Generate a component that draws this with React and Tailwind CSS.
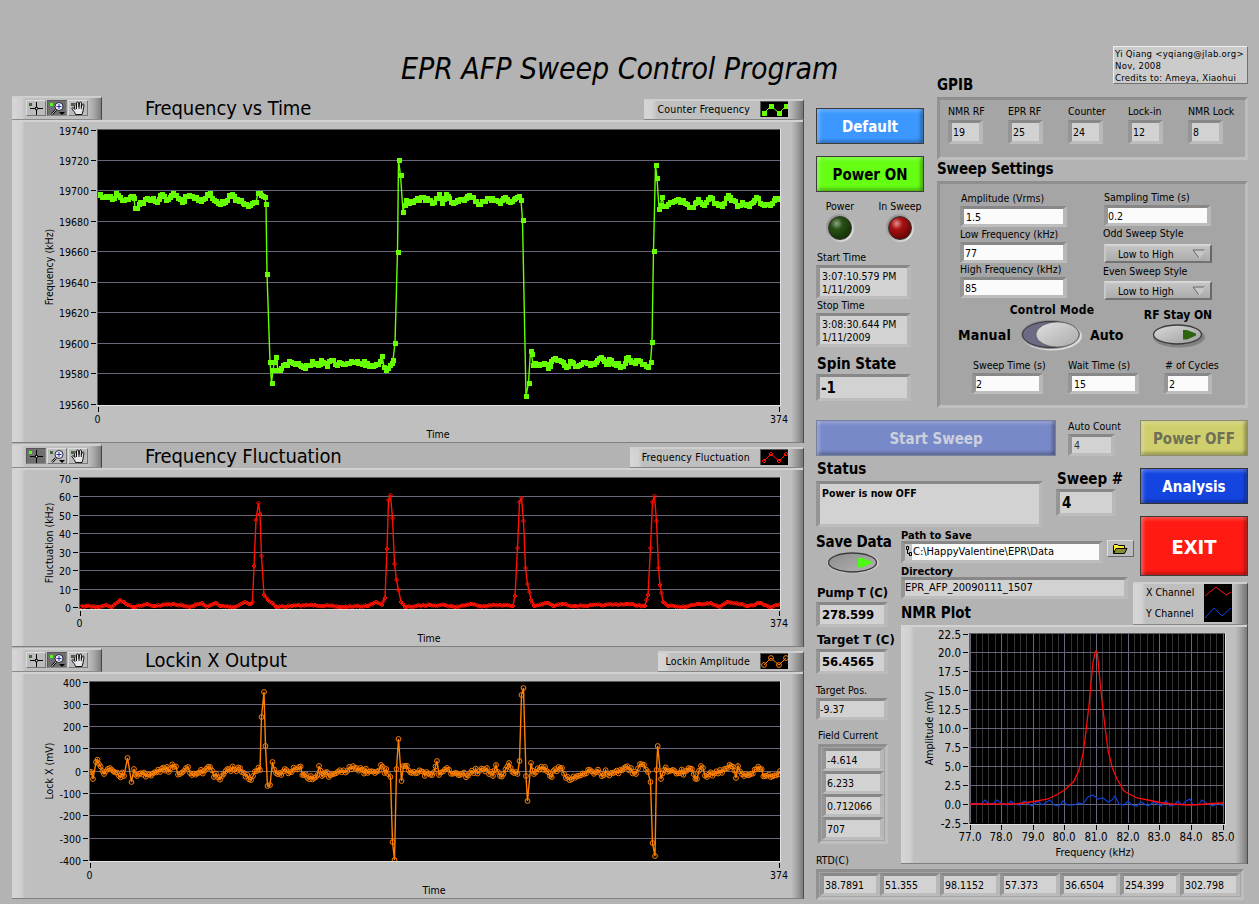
const GREEN = [[98,195],[102,197],[108,197],[114,198],[116,193],[120,197],[122,200],[128,199],[131,196],[134,198],[135,208],[137,208],[140,202],[143,203],[145,199],[150,200],[153,198],[157,202],[162,194],[166,200],[173,193],[178,198],[182,202],[187,196],[192,196],[198,200],[203,199],[210,193],[214,200],[218,203],[225,202],[229,195],[232,194],[235,200],[241,200],[246,204],[252,203],[256,202],[258,193],[261,195],[265,197],[266,204],[267,274],[270,362],[271.5,383],[273,370],[276,357],[278,370],[283,365],[291,362],[298,363],[303,367],[308,365],[312,361],[318,365],[321,360],[327,366],[331,360],[335,364],[345,364],[355,362],[367,363],[371,365],[378,364],[382,356],[384,367],[386,370],[390,365],[393,360],[395,343],[397.5,252],[398.5,160],[400.5,175],[403,212],[406,200],[409,203],[417,198],[427,198],[432,203],[439,194],[442,203],[446,194],[451,202],[462,199],[471,197],[478,204],[487,198],[496,200],[500,203],[505,197],[510,202],[519,196],[521,200],[522.5,220],[526,396],[528.5,383],[530.5,351],[531.5,354],[533,365],[544,363],[548,368],[553,359],[561,361],[566,367],[570,361],[575,366],[583,362],[590,365],[601,357],[606,364],[611,360],[616,365],[623,366],[628,357],[633,362],[638,360],[642,364],[648,367],[650.5,362],[652,342],[653.5,251],[655.5,165],[657,178],[659,209],[662,197],[664,206],[672,202],[678,199],[685,203],[693,207],[698,199],[704,205],[710,197],[716,203],[722,206],[728,195],[733,200],[737,206],[742,202],[749,206],[756,197],[760,203],[770,205],[777,198],[780,199]];
const RED = [[81,607],[86,606],[98,607],[106,605],[112,607],[120,600],[126,604],[134,607],[147,604],[155,606],[173,604],[190,607],[202,603],[207,607],[216,603],[220,606],[235,607],[245,602],[251,604],[252.5,602],[254,566],[256,520],[258.5,503],[260,514],[261.5,556],[264,595],[268,600],[272,603],[276,607],[292,606],[315,605],[340,607],[367,606],[376,602],[382,605],[385,598],[387,549],[388.5,500],[390.5,495],[392.5,518],[394.5,564],[396.5,580],[398.5,590],[401,602],[405,607],[430,605],[445,605],[455,607],[471,604],[480,606],[500,605],[513,606],[515,596],[517.5,548],[519.5,502],[521.5,498],[523.5,521],[525.5,568],[527.5,584],[529.5,592],[531,600],[534,606],[548,603],[553,606],[562,604],[575,606],[605,605],[626,604],[645,606],[648,595],[650.5,548],[652.5,502],[654.5,496],[656.5,521],[658.5,568],[660,585],[661.5,593],[663,602],[668,606],[685,607],[700,604],[711,603],[720,607],[727,602],[742,604],[748,606],[760,603],[772,607],[780,604]];
const ORANGE = [[90,772],[93,779],[96,762],[99,764],[104,774],[112,770],[124,776],[127.5,758],[131.5,782],[134,769],[137,776],[160,772],[174,767],[180,774],[188,767],[192,775],[210,767],[214,777],[222,776],[229,769],[240,768],[251,780],[257,771],[260,770],[261.5,717],[264,692],[265.5,746],[267.5,786],[270,785],[272.5,762],[276,773],[290,772],[299,767],[304,775],[316,777],[319,766],[322,776],[334,774],[355,768],[375,773],[381,765],[388,774],[390.5,777],[392.5,842],[394.5,860],[396.5,769],[398.5,739],[401.5,781],[403.5,766],[412,773],[434,772],[437,761],[439,775],[447,768],[455,773],[460,775],[470,773],[487,768],[493,776],[496,765],[500,776],[509,763],[514,773],[517.5,774],[519.5,761],[521.5,695],[523.5,688],[526,776],[527.5,801],[531,763],[534,774],[545,767],[550,776],[562,768],[566,778],[590,770],[600,773],[615,772],[631,768],[636,774],[640,764],[648,772],[650.5,782],[652.5,843],[655,856],[656.5,770],[657.7,746],[661,779],[664,770],[680,773],[692,769],[697,779],[701,766],[707,777],[720,770],[728,768],[731,766],[736,778],[738,766],[744,776],[760,769],[765,776],[780,771]];
const X_CHANNEL = [[970,804],[1016,804],[1034,801.5],[1048,799],[1058,794],[1066,789],[1074,781],[1079,770],[1083,754],[1086,731],[1089,705],[1091,683],[1093,662],[1095,653],[1096,651],[1097.5,654],[1099,671],[1102,701],[1105,727],[1108,750],[1112,767],[1117,779],[1124,791],[1129,794],[1137,798],[1148,800],[1160,802.5],[1172,804],[1188,805],[1200,804.5],[1212,803.5],[1223,803]];
const Y_CHANNEL = [[970,804],[976,803],[981,804],[985,800],[989,804],[994,803],[997,800],[1001,803],[1007,805],[1011,801],[1014,804],[1020,805],[1024,801],[1028,803],[1032,806],[1038,801],[1042,805],[1050,800],[1054,805],[1059,806],[1063,801],[1067,805],[1074,805],[1079,803],[1083,804],[1088,797],[1093,795],[1098,799],[1103,798],[1108,802],[1112,800],[1115,796],[1119,804],[1124,805],[1128,801],[1132,805],[1137,806],[1141,802],[1148,806],[1154,802],[1161,806],[1166,801],[1170,806],[1174,805],[1178,801],[1182,805],[1186,801],[1190,799],[1193,805],[1199,804],[1202,800],[1206,803],[1213,806],[1218,803],[1223,806]];

// Resample a polyline at the scan pitch; flat stretches get measurement noise.
function resample(points, noise, seed) {
  const out = [];
  let s = seed;
  const rnd = () => {
    s = (s * 16807) % 2147483647;
    return s / 2147483647 - 0.5;
  };
  for (let i = 0; i < points.length - 1; i++) {
    const [x0, y0] = points[i];
    const [x1, y1] = points[i + 1];
    const steep = Math.abs(y1 - y0) > 14;
    out.push([x0, y0]);
    const n = steep ? 1 : Math.round((x1 - x0) / 1.83);
    for (let k = 1; k < n; k++) {
      out.push([x0 + ((x1 - x0) * k) / n, y0 + ((y1 - y0) * k) / n + rnd() * noise]);
    }
  }
  out.push(points[points.length - 1]);
  return out;
}

const toLine = (pts) => pts.map(([x, y]) => `${x.toFixed(1)},${y.toFixed(1)}`).join(" ");

function Marker({ kind, x, y }) {
  if (kind === "square") return <rect x={Math.round(x) - 2} y={Math.round(y) - 2} width="5" height="5" fill="#66ff00" />;
  if (kind === "diamond") return <path d={`M${x - 2} ${y}l2 -2l2 2l-2 2z`} fill="none" stroke="#ff1000" />;
  return <circle cx={x} cy={y} r="2.4" fill="none" stroke="#ff8000" />;
}

function Scope({ top, height, plot, yLabels, yFirst, yStep, yTitle, points, color, kind, titleX, titleY }) {
  const [x0, y0, x1, y1] = plot;
  const mid = (y0 + y1) / 2;
  return (
    <svg className="block text-[10.5px]" width="792" height={height} viewBox={`12 ${top} 792 ${height}`}>
      <rect x={x0} y={y0} width={x1 - x0} height={y1 - y0} fill="#000" />
      <path d={`M${x0 + 0.5} ${y1}V${y0 + 0.5}H${x1}`} fill="none" stroke="#5c5c5c" />
      <path d={`M${x0} ${y1 + 0.5}H${x1 + 0.5}V${y0}`} fill="none" stroke="#e2e2e2" />
      {yLabels.map((label, i) => {
        const y = Math.floor(yFirst + i * yStep) + 0.5;
        return (
          <g key={label}>
            {i > 0 && i < yLabels.length - 1 && <path d={`M${x0 + 1} ${y}H${x1}`} stroke="#676779" />}
            <path d={`M${x0 - 6} ${y}h5`} stroke="#000" />
            <text x={x0 - 8} y={y + 4} textAnchor="end">{label}</text>
          </g>
        );
      })}
      <path d={`M${x0 + 1.5} ${y1 + 2}v5M${x1 - 0.5} ${y1 + 2}v5`} stroke="#000" />
      <text x={x0 + 0.5} y={y1 + 18} textAnchor="middle">0</text>
      <text x={x1 - 1} y={y1 + 18} textAnchor="middle">374</text>
      <text x={titleX} y={titleY} textAnchor="middle">Time</text>
      <text transform={`translate(53 ${mid}) rotate(-90)`} textAnchor="middle">{yTitle}</text>
      <svg x={x0 + 1} y={y0 + 1} width={x1 - x0 - 1} height={y1 - y0 - 1} viewBox={`${x0 + 1} ${y0 + 1} ${x1 - x0 - 1} ${y1 - y0 - 1}`}>
        <polyline points={toLine(points)} fill="none" stroke={color} strokeWidth="1.4" />
        {points.map(([x, y], i) => <Marker key={i} kind={kind} x={x} y={y} />)}
      </svg>
    </svg>
  );
}

function ToolPalette({ active }) {
  const cell = "w-[20px] h-4 border border-t-[#dedede] border-l-[#dedede] border-b-[#777] border-r-[#777] bg-[#bcbcbc]";
  const pressed = "w-[20px] h-4 border border-t-[#555] border-l-[#555] border-b-[#888] border-r-[#888] bg-[#6f6f6f]";
  const led = (i) => (active === i ? "#52ff1a" : "#3e6a35");
  return (
    <div className="flex gap-px w-[90px] h-6 pl-[14px] pt-[2px] border-t-2 border-t-[#cfcfcf] border-b border-b-[#8a8a8a] border-r border-r-[#444] bg-[linear-gradient(90deg,#d6d6d6_0,#d0d0d0_9px,#bfbfbf_14px,#bfbfbf_76px,#a8a8a8_82px,#7a7a7a_90px)]">
      <div className={active === 0 ? pressed : cell}>
        <svg width="18" height="14">
          <rect x="2" y="2" width="3" height="3" fill={led(0)} />
          <path d="M3 7.5h5M11 7.5h5M9.5 1v5M9.5 9v5" stroke="#000" />
          <rect x="8.5" y="6.5" width="2" height="2" fill="#eee" stroke="#000" strokeWidth=".8" />
        </svg>
      </div>
      <div className={active === 1 ? pressed : cell}>
        <svg width="18" height="14">
          <rect x="2" y="2" width="3" height="3" fill={led(1)} />
          <path d="M8 9L4 13" stroke="#000" strokeWidth="2.2" />
          <path d="M8 9L4 13" stroke="#ddd" strokeWidth=".8" />
          <circle cx="11" cy="5.5" r="4" fill="#f4f4ff" stroke="#223" />
          <path d="M8.5 5.5h5M11 3v5" stroke="#22309a" />
          <path d="M11 11h6l-3 3z" fill="#000" />
        </svg>
      </div>
      <div className={active === 2 ? pressed : cell}>
        <svg width="18" height="14">
          <path d="M6.5 13.5C6 11 4 9.5 2.8 7.5C3.3 6.3 4.8 6.500 6 8.500L5 3.500C5.300 2.200 6.600 2.300 7 3.500L7.500 6V1.800C8 .6 9.300.6 9.600 1.800L10 5.800L10.600 1.500C11.200.6 12.400.8 12.500 2L12.300 6L13.300 3.500C14 2.600 15 3 15 4L14 10L13 13.500Z" fill="#e8e8e8" stroke="#000" strokeWidth=".9" />
          <path d="M7.500 6V8M10 5.500V8M12.300 6V8" stroke="#000" strokeWidth=".9" />
          <rect x="2" y="2" width="3" height="3" fill={led(2)} />
        </svg>
      </div>
    </div>
  );
}

function Tab({ className, children }) {
  return (
    <div className={`flex items-center border-t-2 border-t-[#cfcfcf] border-b border-b-[#858585] border-r border-r-[#4c4c4c] bg-[linear-gradient(90deg,#d6d6d6_0,#d2d2d2_8px,#bfbfbf_13px,#bfbfbf_calc(100%-14px),#a8a8a8_calc(100%-9px),#757575_100%)] ${className}`}>
      {children}
    </div>
  );
}

function LegendSwatch({ color, kind }) {
  const pts = [[3, 11], [10, 4], [18, 11], [25, 4]];
  return (
    <svg className="border-t border-l border-[#555]" width="28" height="16">
      <rect width="28" height="16" fill="#000" />
      <polyline points={toLine(pts)} fill="none" stroke={color} />
      {pts.map(([x, y]) => <Marker key={x} kind={kind} x={x} y={y} />)}
    </svg>
  );
}

function ScopePanel({ title, legend, legendClass, active, ...scope }) {
  return (
    <section>
      <div className="flex h-6 items-end">
        <ToolPalette active={active} />
        <h2 className="ml-[43px] mb-px flex-1 text-[20px] leading-[22px] tracking-[-0.12px] whitespace-nowrap">{title}</h2>
        <Tab className={`h-[21px] justify-end pb-[2px] pr-[15px] gap-[10px] ${legendClass}`}>
          <span className="whitespace-nowrap tracking-[0.18px]">{legend}</span>
          <LegendSwatch color={scope.color} kind={scope.kind} />
        </Tab>
      </div>
      <div className="w-[792px] border-r border-r-[#4c4c4c] bg-[linear-gradient(90deg,#d6d6d6_0,#d0d0d0_9px,#bfbfbf_13px,#bfbfbf_779px,#a8a8a8_784px,#757575_792px)]">
        <div className="border-t-2 border-t-[#d2d2d2] border-b border-b-[#7e7e7e]">
          <div className="-mt-[2px] -mb-px">
            <Scope {...scope} />
          </div>
        </div>
      </div>
    </section>
  );
}

function Well({ className = "", pad = "pl-[2px]", align = "items-center", light, children }) {
  return (
    <div className={`flex border-[4px] border-y-[3px] border-t-[#888] border-l-[#959595] border-r-[#b8b8b8] border-b-[#bdbdbd] whitespace-nowrap ${align} ${pad} ${light ? "bg-[#fbfbfb]" : "bg-[#d2d2d2]"} ${className}`}>
      {children}
    </div>
  );
}

function Label({ className = "", pad = "pl-px", children }) {
  return <div className={`whitespace-nowrap ${pad} ${className}`}>{children}</div>;
}

function PushButton({ className, children }) {
  return (
    <button type="button" className={`flex items-center justify-center pt-[2px] border font-bold shadow-[inset_4px_0_3px_-1px_rgba(255,255,255,.22),inset_0_3px_3px_rgba(255,255,255,.18),inset_-4px_0_3px_-1px_rgba(0,0,0,.25),inset_0_-3px_3px_rgba(0,0,0,.22)] ${className}`}>
      {children}
    </button>
  );
}

function Led({ label, className }) {
  return (
    <div className="flex flex-col items-center w-[60px] shrink-0">
      <span className="h-[15px] leading-[15px] whitespace-nowrap">{label}</span>
      <div className="size-[28px] p-[2px] rounded-full bg-linear-to-br from-[#8b8b8b] via-[#b0b0b0] to-[#f4f4f4]">
        <div className={`size-6 rounded-full border border-[#303030] ${className}`} />
      </div>
    </div>
  );
}

function Ring() {
  return (
    <div className="flex items-center justify-between w-[108px] h-[19px] pl-3 pr-1 border-2 border-t-[#d6d6d6] border-l-[#c8c8c8] border-b-[#727272] border-r-[#676767] bg-linear-to-b from-[#c4c4c4] to-[#acacac]">
      <span className="whitespace-nowrap">Low to High</span>
      <svg width="14" height="10">
        <path d="M1 1H13L7 9Z" fill="#c6c6c6" stroke="#666" />
        <path d="M7 9L13 1" stroke="#eee" />
      </svg>
    </div>
  );
}

function OvalButton({ on }) {
  return (
    <svg width="56" height="26">
      <defs>
        <linearGradient id={on ? "ovalOn" : "ovalOff"} x1="0" y1="0" x2="1" y2="1">
          <stop offset="0" stopColor={on ? "#8c8c8c" : "#dadada"} />
          <stop offset="1" stopColor={on ? "#b4b4b4" : "#9c9c9c"} />
        </linearGradient>
      </defs>
      <ellipse cx={on ? 28 : 29} cy={on ? 13 : 15} rx="26" ry="10.5" fill={on ? "#cacaca" : "#828282"} />
      <ellipse cx="27.5" cy="12.5" rx="24" ry="9.5" fill={on ? "url(#ovalOn)" : "url(#ovalOff)"} stroke="#3c3c3c" strokeWidth="1.3" />
      <path d="M33 8H37L46 11.5V13.5L37 17.5H33Z" fill={on ? "#4cfb12" : "#2c6412"} />
    </svg>
  );
}

function NmrGraph() {
  const yLabels = ["22.5", "20.0", "17.5", "15.0", "12.5", "10.0", "7.5", "5.0", "2.5", "0.0", "-2.5"];
  const xLabels = ["77.0", "78.0", "79.0", "80.0", "81.0", "82.0", "83.0", "84.0", "85.0"];
  const minor = Array.from({ length: 41 }, (_, i) => Math.floor(970 + i * 6.33) + 0.5);
  return (
    <svg className="block text-[12px]" width="347" height="239" viewBox="901 625 347 239">
      <rect x="969" y="633" width="256" height="191" fill="#000" />
      {minor.map((x, i) => <path key={x} d={`M${x} 634V823`} stroke={i % 5 ? "#333" : "#676779"} />)}
      {yLabels.map((label, i) => {
        const y = Math.floor(634 + i * 18.9) + 0.5;
        return (
          <g key={label}>
            {i > 0 && i < 10 && <path d={`M970 ${y}H1224`} stroke="#676779" />}
            <path d={`M963 ${y}h5`} stroke="#000" />
            <text x="961" y={y + 4.5} textAnchor="end" className="text-[11.5px]">{label}</text>
          </g>
        );
      })}
      {xLabels.map((label, i) => {
        const x = Math.floor(970 + i * 31.65) + 0.5;
        return (
          <g key={label}>
            <path d={`M${x} 825v5`} stroke="#000" />
            <text x={x - 0.5} y="841" textAnchor="middle" className="text-[11.5px]">{label}</text>
          </g>
        );
      })}
      <path d="M969.5 824V633.5H1225" fill="none" stroke="#5c5c5c" />
      <path d="M969 824.5H1225.5V633" fill="none" stroke="#e2e2e2" />
      <polyline points={toLine(Y_CHANNEL)} fill="none" stroke="#0a3fd8" strokeWidth="1.2" />
      <polyline points={toLine(X_CHANNEL)} fill="none" stroke="#ff0a0a" strokeWidth="1.3" />
      <text x="1095" y="856" textAnchor="middle" className="text-[10.8px]">Frequency (kHz)</text>
      <text transform="translate(933 728) rotate(-90)" textAnchor="middle" className="text-[10.5px]">Amplitude (mV)</text>
    </svg>
  );
}

const FRAME = "border-[3px] border-t-[#8e8e8e] border-l-[#929292] border-r-[#bdbdbd] border-b-[#bfbfbf]";

export default function App() {
  const gpib = [["NMR RF", "19"], ["EPR RF", "25"], ["Counter", "24"], ["Lock-in", "12"], ["NMR Lock", "8"]];
  const rtd = ["38.7891", "51.355", "98.1152", "57.373", "36.6504", "254.399", "302.798"];
  return (
    <div className="flex w-[1259px] h-[904px] overflow-hidden bg-[#b3b3b3] text-black text-[10.5px] leading-[14px] font-['DejaVu_Sans_Condensed','DejaVu_Sans',sans-serif]">
      <main className="ml-3 w-[792px] shrink-0">
        <h1 className="h-24 pt-[49px] pl-[389px] text-[30px] leading-10 italic tracking-[-0.07px] whitespace-nowrap">EPR AFP Sweep Control Program</h1>
        <div className="flex flex-col gap-px">
          <ScopePanel
            title="Frequency vs Time" legend="Counter Frequency" legendClass="w-[160px]" active={1}
            top={120} height={323} plot={[97, 129, 780, 405]} yFirst={130} yStep={30.45}
            yLabels={["19740", "19720", "19700", "19680", "19660", "19640", "19620", "19600", "19580", "19560"]}
            yTitle="Frequency (kHz)" points={resample(GREEN, 4, 11)} color="#66ff00" kind="square" titleX={438} titleY={438}
          />
          <ScopePanel
            title="Frequency Fluctuation" legend="Frequency Fluctuation" legendClass="w-[174px]" active={0}
            top={468} height={179} plot={[79, 477, 780, 609]} yFirst={478} yStep={18.57}
            yLabels={["70", "60", "50", "40", "30", "20", "10", "0"]}
            yTitle="Fluctuation (kHz)" points={resample(RED, 1.5, 7)} color="#ff1000" kind="diamond" titleX={429} titleY={642}
          />
          <ScopePanel
            title="Lockin X Output" legend="Lockin Amplitude" legendClass="w-[146px]" active={1}
            top={672} height={227} plot={[89, 681, 780, 861]} yFirst={682} yStep={22.3}
            yLabels={["400", "300", "200", "100", "0", "-100", "-200", "-300", "-400"]}
            yTitle="Lock X (mV)" points={resample(ORANGE, 7, 23)} color="#ff8000" kind="circle" titleX={434} titleY={894}
          />
        </div>
      </main>

      <aside className="ml-3 w-[432px] shrink-0">
        <div className="flex h-[420px] justify-between">
          <div className="w-[108px] pt-[108px]">
            <PushButton className="w-[108px] h-9 border-[#3c3c3c] bg-[#3c98ff] text-white text-[15px]">Default</PushButton>
            <PushButton className="mt-3 w-[108px] h-9 border-[#3c3c3c] bg-[#66ff14] text-[15px]">Power ON</PushButton>
            <div className="flex mt-[7px] -ml-[6px]">
              <Led label="Power" className="bg-[radial-gradient(circle_at_35%_30%,#8fa388_0,#285214_28%,#16350a_70%)]" />
              <Led label="In Sweep" className="bg-[radial-gradient(circle_at_35%_30%,#df9090_0,#a81212_28%,#680505_75%)]" />
            </div>
            <Label className="mt-2">Start Time</Label>
            <Well className="mt-px w-[95px] h-[34px] leading-[13px]" pad="pl-[2px] pt-px">3:07:10.579 PM<br />1/11/2009</Well>
            <Label className="h-[14px] leading-[12px]">Stop Time</Label>
            <Well className="w-[95px] h-[34px] leading-[13px]" pad="pl-[2px] pt-px">3:08:30.644 PM<br />1/11/2009</Well>
            <Label className="mt-[7px] h-5 leading-5 text-[15px] font-bold">Spin State</Label>
            <Well className="w-[95px] h-[27px] text-[15px] font-bold" pad="pl-px">-1</Well>
          </div>

          <div className="w-[311px] pt-[46px]">
            <div className="ml-auto w-[135px] h-[38px] pl-px pt-px border border-t-[#eee] border-l-[#eee] border-b-[#707070] border-r-[#707070] bg-[#cbcbcb] text-[9.5px] leading-3 tracking-[0.27px] whitespace-nowrap">
              Yi Qiang &lt;yqiang@jlab.org&gt;<br />Nov, 2008<br />Credits to: Ameya, Xiaohui
            </div>
            <Label className="-mt-2 h-5 leading-[18px] text-[15px] font-bold" pad="pl-0">GPIB</Label>
            <div className={`flex h-[63px] pt-1 pl-2 mt-px bg-[#a5a5a5] ${FRAME}`}>
              {gpib.map(([name, value]) => (
                <div key={name} className="w-[60px] shrink-0">
                  <Label className="h-4" pad="pl-0">{name}</Label>
                  <Well className="w-[35px] h-[24px]" pad="pl-px">{value}</Well>
                </div>
              ))}
            </div>
            <Label className="h-[21px] leading-[18px] text-[15px] font-bold tracking-[-0.15px]" pad="pl-0">Sweep Settings</Label>
            <div className={`h-[227px] pl-5 bg-[#a5a5a5] ${FRAME}`}>
              <div className="flex gap-[37px]">
                <div className="w-[107px] pt-[7px]">
                  <Label className="h-[15px]">Amplitude (Vrms)</Label>
                  <Well light className="h-[21px]">1.5</Well>
                  <Label className="h-[15px]" pad="pl-0">Low Frequency (kHz)</Label>
                  <Well light className="h-[21px]" pad="pl-px">77</Well>
                  <Label className="h-[14px] leading-[13px]" pad="pl-0">High Frequency (kHz)</Label>
                  <Well light className="h-[21px]" pad="pl-px">85</Well>
                </div>
                <div className="w-[107px] pt-[6px]">
                  <Label className="h-[15px]" pad="pl-0">Sampling Time (s)</Label>
                  <Well light className="h-[21px]" pad="pl-0">0.2</Well>
                  <Label className="h-[18px] leading-[15px]" pad="-ml-px">Odd Sweep Style</Label>
                  <Ring />
                  <Label className="h-[18px] leading-[16px]" pad="-ml-px">Even Sweep Style</Label>
                  <Ring />
                </div>
              </div>
              <div className="flex h-[60px]">
                <div className="w-[175px] -ml-[2px]">
                  <div className="h-[17px] pt-[3px] pl-[13px] text-center text-[12px] tracking-[0.25px] font-bold">Control Mode</div>
                  <div className="flex items-center gap-[6px] mt-[2px]">
                    <span className="w-[56px] text-[14px] tracking-[0.2px] font-bold">Manual</span>
                    <svg className="shrink-0" width="62" height="32">
                      <defs>
                        <linearGradient id="knob" x1="0" y1="0" x2="1" y2="1">
                          <stop offset="0" stopColor="#e0e0e0" />
                          <stop offset="1" stopColor="#aaa" />
                        </linearGradient>
                      </defs>
                      <ellipse cx="32" cy="17" rx="30" ry="14.5" fill="#dadada" />
                      <ellipse cx="30.5" cy="15.5" rx="29.5" ry="14.5" fill="#8a8a8a" />
                      <ellipse cx="30.5" cy="15.5" rx="28" ry="13" fill="#6b6b85" stroke="#333" />
                      <ellipse cx="37.5" cy="15.5" rx="21.5" ry="12.5" fill="url(#knob)" stroke="#555" strokeWidth=".7" />
                    </svg>
                    <span className="pl-[2px] text-[14px] font-bold">Auto</span>
                  </div>
                </div>
                <div className="w-[70px] ml-[10px] pt-2 flex flex-col items-center">
                  <span className="text-[12px] font-bold whitespace-nowrap">RF Stay ON</span>
                  <OvalButton />
                </div>
              </div>
              <div className="flex pl-3 -mt-[2px]">
                <div className="w-24">
                  <Label className="h-[15px]">Sweep Time (s)</Label>
                  <Well light className="w-[71px] h-[21px]" pad="pl-0">2</Well>
                </div>
                <div className="w-24">
                  <Label className="h-[15px]" pad="pl-0">Wait Time (s)</Label>
                  <Well light className="w-[71px] h-[21px]">15</Well>
                </div>
                <div>
                  <Label className="h-[15px]"># of Cycles</Label>
                  <Well light className="w-[48px] h-[21px]" pad="pl-px">2</Well>
                </div>
              </div>
            </div>
          </div>
        </div>

        <div className="flex h-[205px]">
          <div className="w-[317px] shrink-0">
            <div className="flex">
              <PushButton className="w-[240px] h-9 border-[#77809c] bg-[#7889c9] text-[#ccd0dc] text-[15px]">Start Sweep</PushButton>
              <div className="ml-3 -mt-px">
                <Label className="h-[15px]" pad="pl-0">Auto Count</Label>
                <Well className="w-[47px] h-[22px] text-[#333]">4</Well>
              </div>
            </div>
            <div className="flex h-[71px]">
              <div className="w-[240px] pt-1">
                <Label className="h-[21px] leading-[18px] text-[15px] font-bold">Status</Label>
                <Well className="w-[227px] h-[46px] font-bold" align="items-start" pad="pl-[2px] pt-[2px]">Power is now OFF</Well>
              </div>
              <div className="pt-[14px]">
                <Label className="h-[19px] leading-[18px] text-[15px] font-bold">Sweep #</Label>
                <Well className="w-[60px] h-[27px] text-[15px] font-bold">4</Well>
              </div>
            </div>
            <div className="flex">
              <div className="w-[85px] shrink-0 pt-[6px]">
                <Label className="h-[17px] leading-[18px] text-[15px] tracking-[-0.2px] font-bold" pad="pl-0">Save Data</Label>
                <div className="pl-[9px]"><OvalButton on /></div>
                <Label className="mt-[9px] h-[17px] leading-[16px] text-[13px] tracking-[-0.2px] font-bold">Pump T (C)</Label>
                <Well className="w-[72px] h-[25px] text-[13px] tracking-[-0.2px] font-bold">278.599</Well>
              </div>
              <div>
                <div className="flex items-start gap-1">
                  <div>
                    <Label className="h-[14px] leading-[17px] text-[11px] font-bold" pad="pl-0">Path to Save</Label>
                    <Well light className="w-[202px] h-[22px]" pad="pl-0">
                      <svg className="mr-px h-4 w-[7px] bg-[#c4c4c4]">
                        <path d="M1.5 2.5h2v3h-2zM4.500 8.500h2v3h-2zM2.500 6v3.500h2" fill="none" stroke="#000" />
                      </svg>
                      <span className="text-[11px]">C:\HappyValentine\EPR\Data</span>
                    </Well>
                  </div>
                  <div className="mt-[13px] w-[27px] h-[17px] pl-1 pt-[2px] border border-t-[#ddd] border-l-[#ddd] border-b-[#666] border-r-[#666] bg-[#bcbcbc]">
                    <svg width="16" height="11">
                      <path d="M1.5 10V2.5L2.5 1.5H5.5L6.5 2.5H12.5V5" fill="#ffee30" stroke="#000" />
                      <path d="M1.5 10.5L4 5.5H15L12.5 10.5Z" fill="#8c8c35" stroke="#000" />
                    </svg>
                  </div>
                </div>
                <Label className="h-[14px] leading-[17px] text-[11px] font-bold" pad="pl-0">Directory</Label>
                <Well className="w-[227px] h-[22px] text-[11px]" pad="pl-0">EPR_AFP_20090111_1507</Well>
                <Label className="pt-1 leading-5 text-[15px] font-bold" pad="pl-0">NMR Plot</Label>
              </div>
            </div>
          </div>
          <div className="w-[115px]">
            <div className="flex flex-col gap-3 pl-[7px]">
              <PushButton className="w-[108px] h-9 border-[#8d8d70] bg-[#cfcf6e] text-[#6f6f58] text-[15px]">Power OFF</PushButton>
              <PushButton className="w-[108px] h-9 border-[#333] bg-[#1545e0] text-white text-[15px]">Analysis</PushButton>
              <PushButton className="w-[108px] h-[60px] border-[#3c3c3c] bg-[#ff1a14] text-white text-[20px]">EXIT</PushButton>
            </div>
            <Tab className="mt-[6px] w-[115px] h-[43px] pl-[13px] pb-[2px]">
              <div className="w-[58px] leading-[21px]">X Channel<br />Y Channel</div>
              <svg className="bg-black" width="28" height="38">
                <path d="M1 12L12 3L22 11L27 8" fill="none" stroke="#ff1010" />
                <path d="M1 34L10 24L18 32L27 24" fill="none" stroke="#1040e0" />
              </svg>
            </Tab>
          </div>
        </div>

        <div className="flex h-[244px]">
          <div className="w-[85px] shrink-0 pt-[6px]">
            <Label className="h-[18px] leading-[17px] text-[13px] tracking-[0.05px] font-bold">Target T (C)</Label>
            <Well className="w-[72px] h-[25px] text-[13px] tracking-[-0.2px] font-bold">56.4565</Well>
            <Label className="mt-[9px] h-[15px]" pad="pl-0">Target Pos.</Label>
            <Well className="w-[72px] h-[22px]" pad="pl-0">-9.37</Well>
            <Label className="mt-2 h-4" pad="pl-[2px]">Field Current</Label>
            <div className={`ml-[2px] w-[70px] h-[100px] p-px bg-[#a5a5a5] ${FRAME}`}>
              {["-4.614", "6.233", "0.712066", "707"].map((value) => (
                <Well key={value} className="h-[23px]" pad="pl-px">{value}</Well>
              ))}
            </div>
            <Label className="mt-[9px]" pad="pl-0">RTD(C)</Label>
          </div>
          <div className="w-[347px] h-[239px] border-r border-r-[#4c4c4c] bg-[linear-gradient(90deg,#d6d6d6_0,#d0d0d0_9px,#bfbfbf_13px,#bfbfbf_334px,#a8a8a8_339px,#757575_347px)]">
            <div className="h-[239px] border-t-2 border-t-[#d2d2d2] border-b border-b-[#7e7e7e]">
              <div className="-mt-[2px] -mb-px">
                <NmrGraph />
              </div>
            </div>
          </div>
        </div>
        <div className={`flex w-[428px] h-[31px] p-px bg-[#a5a5a5] ${FRAME}`}>
          {rtd.map((value) => (
            <Well key={value} className="w-[60px] h-[23px] shrink-0" pad="pl-px">{value}</Well>
          ))}
        </div>
      </aside>
    </div>
  );
}
